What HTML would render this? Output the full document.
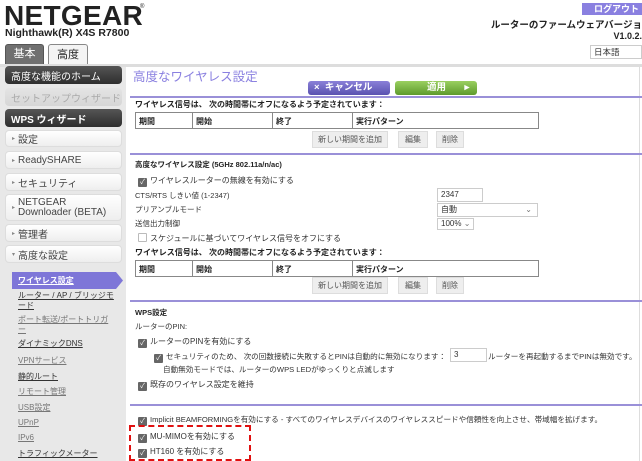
<!DOCTYPE html>
<html><head><meta charset="utf-8"><style>
*{margin:0;padding:0;box-sizing:border-box}
body{width:642px;height:461px;overflow:hidden;background:#fff;position:relative;font-family:"Liberation Sans","Noto Sans CJK JP",sans-serif;font-size:9px;color:#333}
.a{position:absolute;white-space:nowrap}
.sb{position:absolute;left:5px;width:117px;border-radius:4px;font-size:10px;padding-left:6px;display:flex;align-items:center;white-space:nowrap;overflow:hidden}
.dk{background:linear-gradient(#555,#2e2e2e);color:#fff}
.lt{background:linear-gradient(#fff,#eee);color:#444;border:1px solid #ddd}
.sub{position:absolute;left:18px;font-size:8px;color:#444;text-decoration:underline;white-space:nowrap}
.line{position:absolute;left:130px;right:0;height:2px;background:#9a90d8}
.tbl{position:absolute;left:135px;width:404px;height:17px;border:1px solid #888;display:flex;font-weight:bold;font-size:8px;color:#222}
.tbl div{border-right:1px solid #888;padding:3px}
.btn{position:absolute;height:17px;background:#eee;border:1px solid #ddd;font-size:8px;color:#555;display:flex;align-items:center;justify-content:center}
.cb{display:inline-block;width:9px;height:9px;background:#666;color:#fff;font-size:7px;line-height:9px;text-align:center;margin-right:3px;vertical-align:-1px;border-radius:1px}
.t{position:absolute;font-size:8px;color:#333;white-space:nowrap}
.b{font-weight:bold;color:#222}
.inp{position:absolute;border:1px solid #ccc;background:#fff;font-size:8px;padding-left:3px;line-height:12px}
</style></head><body>
<div class="a" style="left:4px;top:0px;font-size:28px;font-weight:900;color:#222;transform:scaleX(1.0);transform-origin:0 0;letter-spacing:0.3px">NETGEAR</div>
<div class="a" style="left:140px;top:4px;font-size:6px;color:#222">®</div>
<div class="a" style="left:5px;top:27px;font-size:10.5px;font-weight:bold;color:#222">Nighthawk(R) X4S R7800</div>
<div class="a" style="left:5px;top:44px;width:39px;height:20px;background:#707070;border:1px solid #555;border-bottom:none;border-radius:3px 3px 0 0;color:#fff;font-size:11px;text-align:center;line-height:19px">基本</div>
<div class="a" style="left:48px;top:44px;width:40px;height:22px;background:#f4f4f4;border:1px solid #888;border-bottom:none;border-radius:3px 3px 0 0;color:#222;font-size:11px;text-align:center;line-height:20px">高度</div>
<div class="a" style="left:0;top:64px;width:642px;height:3px;background:#ddd"></div>
<div class="a" style="left:582px;top:3px;width:60px;height:12px;background:#8a80e0;color:#fff;font-size:9px;font-weight:bold;padding-left:12px;line-height:12px">ログアウト</div>
<div class="a" style="right:0;top:17px;font-size:9.5px;font-weight:bold;color:#222">ルーターのファームウェアバージョ</div>
<div class="a" style="right:0;top:31px;font-size:9px;font-weight:bold;color:#222">V1.0.2.</div>
<div class="a" style="left:590px;top:45px;width:52px;height:14px;border:1px solid #ccc;font-size:8.5px;padding-left:3px;line-height:12px">日本語</div>
<div class="a" style="left:0;top:67px;width:126px;height:394px;background:#e8e8e8"></div>
<div class="sb dk" style="top:66px;height:18px">高度な機能のホーム</div>
<div class="sb" style="top:88px;height:18px;background:linear-gradient(#e4e4e4,#d6d6d6);color:#aaa">セットアップウィザード</div>
<div class="sb dk" style="top:109px;height:18px;font-weight:bold">WPS ウィザード</div>
<div class="sb lt" style="top:130px;height:17px"><span style="font-size:6px;margin-right:3px;color:#888">▸</span>設定</div>
<div class="sb lt" style="top:151px;height:18px"><span style="font-size:6px;margin-right:3px;color:#888">▸</span>ReadySHARE</div>
<div class="sb lt" style="top:173px;height:18px"><span style="font-size:6px;margin-right:3px;color:#888">▸</span>セキュリティ</div>
<div class="sb lt" style="top:194px;height:27px;line-height:10px"><span style="font-size:6px;margin-right:3px;color:#888">▸</span><span>NETGEAR<br>Downloader (BETA)</span></div>
<div class="sb lt" style="top:224px;height:18px"><span style="font-size:6px;margin-right:3px;color:#888">▸</span>管理者</div>
<div class="sb lt" style="top:245px;height:18px"><span style="font-size:6px;margin-right:3px;color:#888">▾</span>高度な設定</div>
<svg class="a" style="left:12px;top:272px" width="112" height="17"><polygon points="0,0 104,0 111,8.5 104,17 0,17" fill="#7e76d8"/></svg>
<div class="sub" style="top:275px;color:#fff;font-weight:bold">ワイヤレス設定</div>
<div class="sub" style="top:291px;line-height:10px;color:#333">ルーター / AP / ブリッジモ<br>ード</div>
<div class="sub" style="top:315px;line-height:10px;color:#777">ポート転送/ポートトリガ<br>ー</div>
<div class="sub" style="top:338px;color:#333">ダイナミックDNS</div>
<div class="sub" style="top:355px;color:#777">VPNサービス</div>
<div class="sub" style="top:371px;color:#333">静的ルート</div>
<div class="sub" style="top:386px;color:#777">リモート管理</div>
<div class="sub" style="top:402px;color:#777">USB設定</div>
<div class="sub" style="top:418px;color:#777">UPnP</div>
<div class="sub" style="top:433px;color:#777">IPv6</div>
<div class="sub" style="top:448px;color:#333">トラフィックメーター</div>
<div class="a" style="left:639px;top:67px;width:1px;height:394px;background:#ddd"></div>
<div class="a" style="left:133px;top:66px;font-size:12.5px;color:#8a80e0">高度なワイヤレス設定</div>
<div class="a" style="left:308px;top:81px;width:82px;height:14px;background:linear-gradient(#8a80d8,#5a52b0);border-radius:3px;color:#fff;font-size:9.5px;font-weight:bold;line-height:14px;padding-left:6px">×&nbsp; キャンセル</div>
<div class="a" style="left:395px;top:81px;width:82px;height:14px;background:linear-gradient(#9ad060,#5e9a2c);border-radius:3px;color:#fff;font-size:9.5px;font-weight:bold;line-height:14px;padding-left:32px">適用 &nbsp; &nbsp; &nbsp; ▸</div>
<div class="line" style="top:96px"></div>
<div class="t b" style="left:135px;top:99px">ワイヤレス信号は、 次の時間帯にオフになるよう予定されています：</div>
<div class="tbl" style="top:112px"><div style="width:57px">期間</div><div style="width:80px">開始</div><div style="width:80px">終了</div><div style="border:none">実行パターン</div></div>
<div class="btn" style="left:312px;top:131px;width:76px">新しい期間を追加</div>
<div class="btn" style="left:398px;top:131px;width:30px">編集</div>
<div class="btn" style="left:436px;top:131px;width:28px">削除</div>
<div class="line" style="top:153px"></div>
<div class="t b" style="left:135px;top:159px;font-size:7.5px">高度なワイヤレス設定 (5GHz 802.11a/n/ac)</div>
<div class="t" style="left:138px;top:175px"><span class="cb">✓</span>ワイヤレスルーターの無線を有効にする</div>
<div class="t" style="left:135px;top:190px;font-size:7.5px">CTS/RTS しきい値 (1-2347)</div>
<div class="inp" style="left:437px;top:188px;width:46px;height:14px">2347</div>
<div class="t" style="left:135px;top:204px;font-size:7.5px">プリアンブルモード</div>
<div class="inp" style="left:437px;top:203px;width:101px;height:14px">自動<span style="position:absolute;right:5px;color:#777">⌄</span></div>
<div class="t" style="left:135px;top:218px;font-size:7.5px">送信出力制御</div>
<div class="inp" style="left:437px;top:218px;width:37px;height:12px;line-height:10px">100% <span style="color:#777">⌄</span></div>
<div class="t" style="left:138px;top:233px"><span class="cb" style="background:#fff;border:1px solid #bbb"></span>スケジュールに基づいてワイヤレス信号をオフにする</div>
<div class="t b" style="left:135px;top:247px">ワイヤレス信号は、 次の時間帯にオフになるよう予定されています：</div>
<div class="tbl" style="top:260px"><div style="width:57px">期間</div><div style="width:80px">開始</div><div style="width:80px">終了</div><div style="border:none">実行パターン</div></div>
<div class="btn" style="left:312px;top:277px;width:76px">新しい期間を追加</div>
<div class="btn" style="left:398px;top:277px;width:30px">編集</div>
<div class="btn" style="left:436px;top:277px;width:28px">削除</div>
<div class="line" style="top:300px"></div>
<div class="t b" style="left:135px;top:307px;font-size:7.5px">WPS設定</div>
<div class="t" style="left:135px;top:321px;font-size:7.5px">ルーターのPIN:</div>
<div class="t" style="left:138px;top:336px"><span class="cb">✓</span>ルーターのPINを有効にする</div>
<div class="t" style="left:154px;top:351px;font-size:7.6px"><span class="cb">✓</span>セキュリティのため、 次の回数接続に失敗するとPINは自動的に無効になります：</div>
<div class="inp" style="left:450px;top:348px;width:37px;height:14px">3</div>
<div class="t" style="left:488px;top:351px;font-size:7.6px">ルーターを再起動するまでPINは無効です。</div>
<div class="t" style="left:163px;top:364px;font-size:7.6px">自動無効モードでは、ルーターのWPS LEDがゆっくりと点滅します</div>
<div class="t" style="left:138px;top:379px"><span class="cb">✓</span>既存のワイヤレス設定を維持</div>
<div class="line" style="top:404px"></div>
<div class="t" style="left:138px;top:414px;font-size:7.6px"><span class="cb">✓</span>Implicit BEAMFORMINGを有効にする - すべてのワイヤレスデバイスのワイヤレススピードや信頼性を向上させ、帯域幅を拡げます。</div>
<div class="t" style="left:138px;top:431px"><span class="cb">✓</span>MU-MIMOを有効にする</div>
<div class="t" style="left:138px;top:446px"><span class="cb">✓</span>HT160 を有効にする</div>
<div class="a" style="left:129px;top:425px;width:122px;height:36px;border:2px dashed #e01010"></div>
</body></html>
